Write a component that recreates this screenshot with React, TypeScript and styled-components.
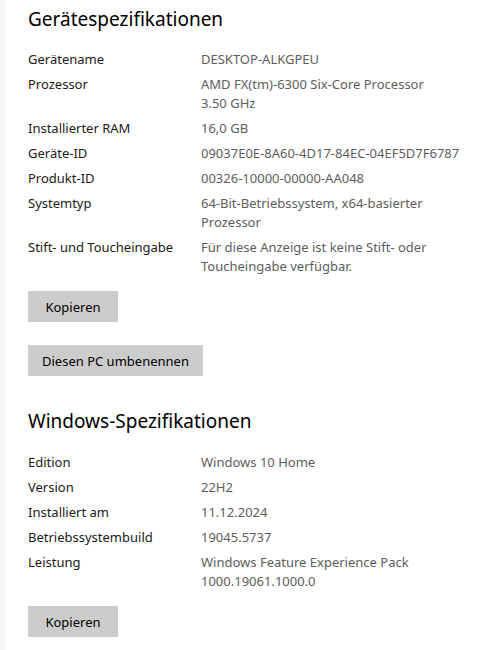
import styled, { createGlobalStyle } from 'styled-components'

const GlobalStyle = createGlobalStyle`
  html, body {
    margin: 0;
    padding: 0;
    background: #ffffff;
  }
  body {
    font-family: 'Noto Sans', 'Open Sans', sans-serif;
    -webkit-font-smoothing: antialiased;
  }
`

const Page = styled.div`
  min-height: 650px;
  box-sizing: border-box;
  border-left: 5px solid #f6f6f6;
  padding: 5px 0 0 23px;
`

const Section = styled.section<{ $top?: number }>`
  margin-top: ${(props) => props.$top ?? 0}px;
`

const Title = styled.h1`
  margin: 0;
  font-weight: 400;
  font-size: 19px;
  line-height: 28px;
  color: #000000;
`

const SpecList = styled.dl<{ $top: number }>`
  margin: ${(props) => props.$top}px 0 0 0;
  display: grid;
  grid-template-columns: 173px 1fr;
  row-gap: 6px;
`

const Label = styled.dt`
  margin: 0;
  font-size: 13px;
  line-height: 19px;
  color: #1a1a1a;
  white-space: nowrap;
`

const Value = styled.dd`
  margin: 0;
  font-size: 13px;
  line-height: 19px;
  color: #5d5d5d;
`

const Line = styled.span`
  display: block;
  white-space: nowrap;
`

const Button = styled.button<{ $top: number }>`
  display: block;
  margin-top: ${(props) => props.$top}px;
  height: 31px;
  min-width: 90px;
  padding: 0 14px;
  border: none;
  background: #cccccc;
  font-family: inherit;
  font-size: 13px;
  color: #000000;
  cursor: pointer;
`

type Spec = { label: string; value: string[] }

const deviceSpecs: Spec[] = [
  { label: 'Gerätename', value: ['DESKTOP-ALKGPEU'] },
  { label: 'Prozessor', value: ['AMD FX(tm)-6300 Six-Core Processor', '3.50 GHz'] },
  { label: 'Installierter RAM', value: ['16,0 GB'] },
  { label: 'Geräte-ID', value: ['09037E0E-8A60-4D17-84EC-04EF5D7F6787'] },
  { label: 'Produkt-ID', value: ['00326-10000-00000-AA048'] },
  { label: 'Systemtyp', value: ['64-Bit-Betriebssystem, x64-basierter', 'Prozessor'] },
  {
    label: 'Stift- und Toucheingabe',
    value: ['Für diese Anzeige ist keine Stift- oder', 'Toucheingabe verfügbar.'],
  },
]

const windowsSpecs: Spec[] = [
  { label: 'Edition', value: ['Windows 10 Home'] },
  { label: 'Version', value: ['22H2'] },
  { label: 'Installiert am', value: ['11.12.2024'] },
  { label: 'Betriebssystembuild', value: ['19045.5737'] },
  { label: 'Leistung', value: ['Windows Feature Experience Pack', '1000.19061.1000.0'] },
]

const Specs = ({ items, top }: { items: Spec[]; top: number }) => (
  <SpecList $top={top}>
    {items.map((item) => [
      <Label key={item.label + '-l'}>{item.label}</Label>,
      <Value key={item.label + '-v'}>
        {item.value.map((line) => (
          <Line key={line}>{line}</Line>
        ))}
      </Value>,
    ])}
  </SpecList>
)

const App = () => {
  return (
    <>
      <GlobalStyle />
      <Page>
        <Section>
          <Title>Gerätespezifikationen</Title>
          <Specs items={deviceSpecs} top={17} />
          <Button $top={15}>Kopieren</Button>
          <Button $top={23}>Diesen PC umbenennen</Button>
        </Section>
        <Section $top={31}>
          <Title>Windows-Spezifikationen</Title>
          <Specs items={windowsSpecs} top={18} />
          <Button $top={15}>Kopieren</Button>
        </Section>
      </Page>
    </>
  )
}

export default App
